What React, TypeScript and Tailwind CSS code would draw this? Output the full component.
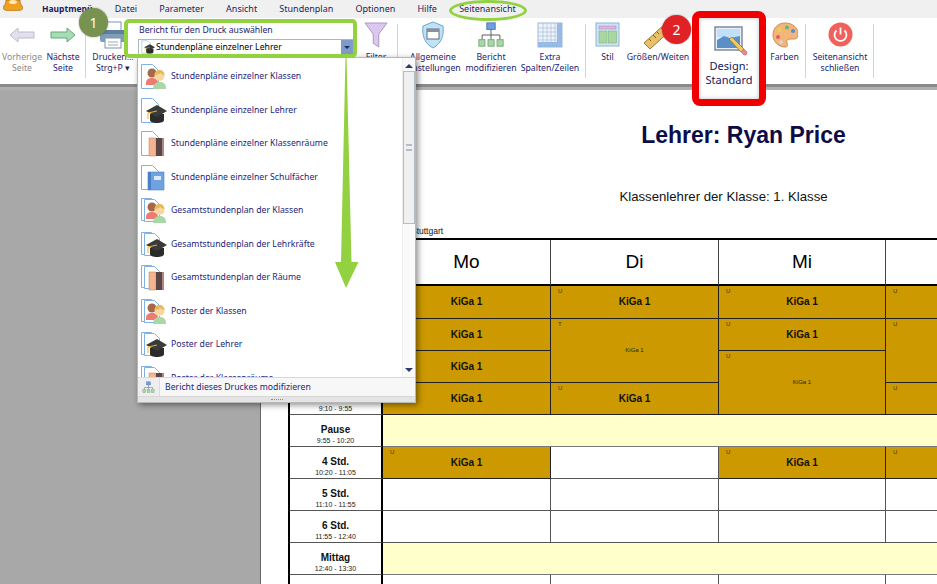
import type { ReactNode } from 'react'

const ui = "font-['Noto_Sans',sans-serif]"

function DocBack({ stacked }: { stacked?: boolean }) {
  return (
    <g fill="#fff" stroke="#7fb2e0" strokeWidth="1">
      {stacked && <path d="M1.5 1.5h10l4 4v18h-14z" />}
      <path d={stacked ? 'M4.5 2.5h10l5 5v17h-15z' : 'M1.5 1.5h11l6 6v18h-17z'} />
    </g>
  )
}

function People() {
  return (
    <g>
      <circle cx="12" cy="10" r="4.5" fill="#a5694a" />
      <path d="M6 20c0-4 3-5 6-5s6 1 6 5v2H6z" fill="#ee7a72" />
      <path d="M13 26c0-5 3-7 7-7s6 2 6 7z" fill="#a9d8a8" />
      <circle cx="19.5" cy="13" r="5" fill="#f8d6a0" />
      <path d="M14.5 12c0-3 2-5 5-5s5 2 5 5c-2 0-3-1-4-2-1 1-3 2-6 2z" fill="#e8b95c" />
    </g>
  )
}

function Cap() {
  return (
    <g>
      <path d="M10 17v6c0 2 3 3 7 3s7-1 7-3v-6z" fill="#2b2b2b" />
      <path d="M6 14l11-6 10 6-10 6z" fill="#3a3a3a" />
      <path d="M17 14l-9 2v6" fill="none" stroke="#f0b030" strokeWidth="1" />
    </g>
  )
}

function Doors() {
  return (
    <g>
      <path d="M9 8h7v18H9z" fill="#f5b490" stroke="#c98a68" strokeWidth=".6" />
      <path d="M16 8h7v18h-7z" fill="#5a4444" />
      <path d="M22 8h2v18h-2z" fill="#a88" />
    </g>
  )
}

function Book() {
  return (
    <g>
      <path d="M8 8h16v18H8z" fill="#6fa3e0" stroke="#4a7fc0" strokeWidth=".6" />
      <path d="M8 8h3v18H8z" fill="#4a80c8" />
      <path d="M14 12h7v4h-7z" fill="#dceafa" />
    </g>
  )
}

function ReportIcon({ kind, stacked, size = 27 }: { kind: string; stacked?: boolean; size?: number }) {
  return (
    <svg width={size} height={size} viewBox="0 0 27 27" className="shrink-0">
      <DocBack stacked={stacked} />
      {kind === 'people' && <People />}
      {kind === 'cap' && <Cap />}
      {kind === 'doors' && <Doors />}
      {kind === 'book' && <Book />}
    </svg>
  )
}

function OrgChart({ size = 30 }: { size?: number }) {
  return (
    <svg width={size} height={size} viewBox="0 0 30 30">
      <rect x="10.5" y="2" width="9" height="7" fill="#6f9fe0" stroke="#4a78b8" />
      <path d="M15 9v6M5.5 20v-5h19v5M15 15v5" fill="none" stroke="#555" />
      <rect x="2" y="20" width="6.5" height="7" fill="#a8d8a8" stroke="#78a878" />
      <rect x="11.8" y="20" width="6.5" height="7" fill="#a8d8a8" stroke="#78a878" />
      <rect x="21.5" y="20" width="6.5" height="7" fill="#a8d8a8" stroke="#78a878" />
    </svg>
  )
}

function GridIcon() {
  const lines = [6, 10, 14, 18, 22]
  return (
    <svg width="26" height="26" viewBox="0 0 26 26">
      <rect x="1" y="1" width="24" height="24" fill="#eef3fa" stroke="#9db8d8" />
      <rect x="20" y="1" width="5" height="24" fill="#8fb8e8" />
      <rect x="1" y="20" width="24" height="5" fill="#8fb8e8" />
      {lines.map((n) => (
        <path key={n} d={`M${n} 1v24M1 ${n}h24`} stroke="#a9c0dc" strokeWidth=".7" />
      ))}
    </svg>
  )
}

function PrinterIcon() {
  return (
    <svg width="30" height="30" viewBox="0 0 30 30">
      <rect x="7" y="2" width="16" height="10" fill="#fff" stroke="#7a93ad" />
      <rect x="2" y="10" width="26" height="12" rx="2" fill="#7f9cb8" />
      <rect x="2" y="10" width="26" height="4" rx="1" fill="#5f7f9f" />
      <rect x="7" y="18" width="16" height="10" fill="#fff" stroke="#7a93ad" />
      <path d="M10 22h10M10 25h10" stroke="#9ab" />
    </svg>
  )
}

function RibbonIcon({ kind }: { kind: string }) {
  switch (kind) {
    case 'back':
      return (
        <svg width="26" height="16" viewBox="0 0 26 16">
          <path d="M9 1L1 8l8 7v-4h16V5H9z" fill="#e2e0ee" stroke="#bcbccc" />
        </svg>
      )
    case 'next':
      return (
        <svg width="26" height="16" viewBox="0 0 26 16">
          <path d="M17 1l8 7-8 7v-4H1V5h16z" fill="#a8dcb4" stroke="#5faa78" />
        </svg>
      )
    case 'print':
      return <PrinterIcon />
    case 'filter':
      return (
        <svg width="24" height="28" viewBox="0 0 26 28">
          <path d="M1 1h24L16 13v14l-6-4V13z" fill="#dcc8ee" stroke="#a890c0" />
        </svg>
      )
    case 'shield':
      return (
        <svg width="24" height="28" viewBox="0 0 24 28">
          <path d="M12 1l10 4c1 9-1 17-10 22C3 22 1 14 2 5z" fill="#bfe2f6" stroke="#6aa6cc" />
          <rect x="6" y="8" width="12" height="10" fill="#fff" stroke="#667" />
          <rect x="6" y="8" width="12" height="3" fill="#8a8fa0" />
        </svg>
      )
    case 'org':
      return <OrgChart size={28} />
    case 'grid':
      return <GridIcon />
    case 'style':
      return (
        <svg width="25" height="25" viewBox="0 0 25 25">
          <rect x="1" y="1" width="23" height="23" fill="#cfe4f6" stroke="#8db4d6" />
          <rect x="4" y="4" width="17" height="3" fill="#d8b8e0" stroke="#a888b0" strokeWidth=".5" />
          <rect x="4" y="9" width="8" height="12" fill="#a8d8a0" stroke="#78a878" strokeWidth=".5" />
          <rect x="13.5" y="9" width="8" height="12" fill="#a8d8a0" stroke="#78a878" strokeWidth=".5" />
        </svg>
      )
    case 'ruler':
      return (
        <svg width="30" height="30" viewBox="0 0 30 30">
          <path d="M1 23L23 3l6 6L7 29z" fill="#e8c06a" stroke="#a07a30" />
          <path d="M6 19l2 2M10 15l3 3M14 12l2 2M18 8l3 3" stroke="#805a20" />
        </svg>
      )
    case 'palette':
      return (
        <svg width="26" height="26" viewBox="0 0 26 26">
          <path d="M13 1C5 1 1 7 1 13s5 12 12 12c3 0 3-2 2-4-1-3 1-4 4-4h3c3 0 4-2 4-5C26 5 20 1 13 1z" fill="#f2b67a" stroke="#c8905a" />
          <circle cx="8" cy="8" r="2" fill="#f0d050" />
          <circle cx="15" cy="5.5" r="2" fill="#68b868" />
          <circle cx="21" cy="9" r="2" fill="#5a8ae0" />
          <circle cx="6" cy="15" r="2" fill="#e85a5a" />
          <circle cx="9" cy="20" r="1.8" fill="#d8d8e8" />
        </svg>
      )
    case 'power':
      return (
        <svg width="25" height="25" viewBox="0 0 25 25">
          <circle cx="12.5" cy="12.5" r="12" fill="#f0605c" />
          <path d="M8.5 8.5a6 6 0 1 0 8 0" fill="none" stroke="#fff" strokeWidth="1.8" />
          <path d="M12.5 5.5v7" stroke="#fff" strokeWidth="1.8" />
        </svg>
      )
    default:
      return null
  }
}

function RibbonItem({ kind, lines, width, muted }: { kind: string; lines: ReactNode[]; width: string; muted?: boolean }) {
  return (
    <div className={`flex flex-col items-center shrink-0 ${width}`}>
      <div className="flex h-[33px] items-center justify-center">
        <RibbonIcon kind={kind} />
      </div>
      <div className={`mt-[1px] text-center text-[8.7px] leading-[11px] whitespace-nowrap ${muted ? 'text-[#8a8a8a]' : 'text-[#1d1d70]'}`}>
        {lines.map((line, i) => (
          <div key={i}>{line}</div>
        ))}
      </div>
    </div>
  )
}

const Sep = () => <div className="mt-[6px] h-[54px] w-px shrink-0 bg-[#d4d4d4]" />

const tabs = ['Datei', 'Parameter', 'Ansicht', 'Stundenplan', 'Optionen', 'Hilfe', 'Seitenansicht']

const reports = [
  { kind: 'people', label: 'Stundenpläne einzelner Klassen' },
  { kind: 'cap', label: 'Stundenpläne einzelner Lehrer' },
  { kind: 'doors', label: 'Stundenpläne einzelner Klassenräume' },
  { kind: 'book', label: 'Stundenpläne einzelner Schulfächer' },
  { kind: 'people', label: 'Gesamtstundenplan der Klassen', stacked: true },
  { kind: 'cap', label: 'Gesamtstundenplan der Lehrkräfte', stacked: true },
  { kind: 'doors', label: 'Gesamtstundenplan der Räume', stacked: true },
  { kind: 'people', label: 'Poster der Klassen', stacked: true },
  { kind: 'cap', label: 'Poster der Lehrer', stacked: true },
  { kind: 'doors', label: 'Poster der Klassenräume', stacked: true },
]

function TimeCell({ name, time }: { name?: string; time?: string }) {
  return (
    <div className="flex flex-col items-center justify-start border-r-2 border-b border-r-black border-b-[#555] bg-white pt-[9px]">
      {name && <div className="text-[10px] font-bold leading-[12px] text-[#111]">{name}</div>}
      {time && <div className="text-[7px] leading-[9px] text-[#222]">{time}</div>}
    </div>
  )
}

function Lesson({ mark = 'U', span, small, dash, label = true }: { mark?: string; span?: boolean; small?: boolean; dash?: boolean; label?: boolean }) {
  return (
    <div className={`relative flex items-center justify-center border-r border-b border-[#222] bg-[#cc9900] pb-[1px] ${span ? 'row-span-2' : ''}`}>
      <span className="absolute left-[7px] top-[1px] text-[6px] leading-[9px] text-[#333]">{mark}</span>
      {label && <span className={small ? 'text-[6px] text-[#222]' : 'text-[10px] font-bold text-[#111]'}>KiGa 1</span>}
      {dash && <span className="absolute bottom-[2px] h-px w-[12px] bg-[#b89a50]" />}
    </div>
  )
}

const Empty = () => <div className="border-r border-b border-[#555] bg-white" />
const Break = () => <div className="col-span-4 border-r border-b border-[#777] bg-[#ffffcc]" />

function Timetable() {
  return (
    <div className="grid w-[760px] grid-cols-[93px_168px_168px_167px_164px] grid-rows-[46px_33px_32px_32px_32px_32px_32px_32px_32px_32px_32px] border-t-2 border-l-2 border-black font-['Liberation_Sans',sans-serif]">
      <div className="border-r border-b-2 border-black bg-white" />
      {['Mo', 'Di', 'Mi', ''].map((d, i) => (
        <div key={i} className="flex items-center justify-center border-r border-b-2 border-r-[#444] border-b-black bg-white text-[19px] text-black">
          {d}
        </div>
      ))}

      <TimeCell />
      <Lesson dash />
      <Lesson dash />
      <Lesson dash />
      <Lesson label={false} />

      <TimeCell />
      <Lesson dash />
      <Lesson mark="T" span small />
      <Lesson dash />
      <Lesson span label={false} />

      <TimeCell />
      <Lesson />
      <Lesson span small />

      <TimeCell name="3 Std." time="9:10 - 9:55" />
      <Lesson />
      <Lesson />
      <Lesson label={false} />

      <TimeCell name="Pause" time="9:55 - 10:20" />
      <Break />

      <TimeCell name="4 Std." time="10:20 - 11:05" />
      <Lesson />
      <Empty />
      <Lesson />
      <Lesson label={false} />

      <TimeCell name="5 Std." time="11:10 - 11:55" />
      <Empty />
      <Empty />
      <Empty />
      <Empty />

      <TimeCell name="6 Std." time="11:55 - 12:40" />
      <Empty />
      <Empty />
      <Empty />
      <Empty />

      <TimeCell name="Mittag" time="12:40 - 13:30" />
      <Break />

      <TimeCell />
      <Empty />
      <Empty />
      <Empty />
      <Empty />
    </div>
  )
}

function ReportPopup() {
  return (
    <div className="absolute left-[137px] top-[57px] z-20 flex h-[346px] w-[279px] flex-col border border-[#b8b8b8] bg-white shadow-[2px_2px_6px_rgba(0,0,0,0.45)]">
      <div className="flex h-[319px] overflow-hidden">
        <div className="flex-1 overflow-hidden pl-[2px] pt-[2px]">
          {reports.map((r) => (
            <div key={r.label} className="flex h-[33.5px] items-center gap-[4px]">
              <ReportIcon kind={r.kind} stacked={r.stacked} />
              <span className="whitespace-nowrap text-[8.7px] text-[#25257a]">{r.label}</span>
            </div>
          ))}
        </div>
        <div className="flex w-[13px] flex-col items-center border-l border-[#eee] bg-[#fafafa]">
          <span className="mt-[6px] h-0 w-0 border-x-[4px] border-b-[4px] border-x-transparent border-b-[#2b3a66]" />
          <div className="mt-[3px] flex h-[153px] w-[12px] items-center justify-center border border-[#b4bcc8] bg-[#f0f0f0]">
            <span className="h-[7px] w-[6px] border-y-2 border-double border-[#b4bcc8]" />
          </div>
          <span className="mt-auto mb-[5px] h-0 w-0 border-x-[4px] border-t-[4px] border-x-transparent border-t-[#2b3a66]" />
        </div>
      </div>
      <div className="flex h-[19px] items-center border-t border-[#d8d8d8] bg-[#f7f7f7]">
        <div className="flex h-full w-[22px] items-center justify-center border-r border-[#ddd] bg-[#eeeeee]">
          <OrgChart size={13} />
        </div>
        <span className="ml-[5px] whitespace-nowrap pt-[1px] text-[8.7px] text-[#25257a]">Bericht dieses Druckes modifizieren</span>
      </div>
      <div className="flex flex-1 items-center justify-center border-t border-[#d8d8d8] bg-[#e4e4e4]">
        <span className="h-px w-[12px] border-t border-dotted border-[#888]" />
      </div>
    </div>
  )
}

function Annotations() {
  return (
    <>
      <div className="absolute left-[124px] top-[19px] z-30 h-[39px] w-[233px] rounded-[5px] border-[4px] border-[#92d13f]" />
      <div className="absolute left-[449px] top-[0px] z-30 h-[21px] w-[78px] rounded-[50%] border-[3px] border-[#92d13f]" />
      <svg width="30" height="234" viewBox="0 0 30 234" className="absolute left-[331px] top-[56px] z-30">
        <path d="M14.5 0h1l5 206h7L15 232 4 206h6z" fill="#92d13f" />
      </svg>
      <div className="absolute left-[79px] top-[8px] z-30 flex h-[29px] w-[29px] items-center justify-center rounded-full bg-[#77934f] text-[14px] text-white shadow-[0_0_2px_rgba(0,0,0,0.4)]">
        1
      </div>
      <div className="absolute left-[662px] top-[15px] z-30 flex h-[29px] w-[29px] items-center justify-center rounded-full bg-[#e02226] text-[14px] text-white shadow-[0_0_2px_rgba(0,0,0,0.4)]">
        2
      </div>
    </>
  )
}

export default function App() {
  return (
    <div className={`relative h-[584px] w-[937px] overflow-hidden bg-[#a8a8a8] ${ui}`}>
      <div className="flex h-[18px] items-center gap-[22.2px] bg-[#f0f0f0] pl-[42px] text-[9px] text-[#1d1d60]">
        <span className="text-[8.5px] font-bold">Hauptmenü</span>
        {tabs.map((t) => (
          <span key={t}>{t}</span>
        ))}
      </div>
      <svg width="20" height="11" viewBox="0 0 20 11" className="absolute left-[3px] top-0">
        <path d="M3 0h14c0 5 3 6 3 8 0 2-4 3-10 3S0 10 0 8c0-2 3-3 3-8z" fill="#f0a020" stroke="#9a5a10" strokeWidth=".6" />
        <ellipse cx="10" cy="2" rx="4" ry="2" fill="#fde8b0" />
      </svg>

      <div className="flex h-[66px] bg-white">
        <RibbonItem kind="back" lines={['Vorherige', 'Seite']} width="w-[44px]" muted />
        <RibbonItem kind="next" lines={['Nächste', 'Seite']} width="w-[38px]" />
        <div className="w-[3px]" />
        <Sep />
        <div className="w-[2px]" />
        <RibbonItem kind="print" lines={['Drucken...', 'Strg+P ▾']} width="w-[50px]" />
        <div className="flex w-[217px] shrink-0 flex-col pt-[7px]">
          <span className="pl-[1px] text-[8.7px] leading-[11px] text-[#1d1d70]">Bericht für den Druck auswählen</span>
          <div className="mt-[3px] flex h-[16px] w-[216px] items-center border border-[#aeb6c2] bg-white pl-[2px]">
            <ReportIcon kind="cap" size={14} />
            <span className="ml-[1px] pt-[2px] text-[8.7px] text-black">Stundenpläne einzelner Lehrer</span>
            <span className="ml-auto flex h-full w-[12px] items-center justify-center bg-[#7f9cc8]">
              <span className="h-0 w-0 border-x-[3px] border-t-[3px] border-x-transparent border-t-[#1d2d60]" />
            </span>
          </div>
        </div>
        <RibbonItem kind="filter" lines={['Filter']} width="w-[42px]" />
        <Sep />
        <div className="w-px" />
        <RibbonItem kind="shield" lines={['Allgemeine', 'Einstellungen']} width="w-[68px]" />
        <RibbonItem kind="org" lines={['Bericht', 'modifizieren']} width="w-[48px]" />
        <RibbonItem kind="grid" lines={['Extra', 'Spalten/Zeilen']} width="w-[70px]" />
        <Sep />
        <RibbonItem kind="style" lines={['Stil']} width="w-[43px]" />
        <RibbonItem kind="ruler" lines={['Größen/Weiten']} width="w-[58px]" />
        <div className="w-[5px]" />
        <div className="relative w-[72px] shrink-0">
          <div className="absolute -top-[7px] left-0 z-30 flex h-[95px] w-[74px] flex-col items-center rounded-[8px] border-[7px] border-[#f00000] bg-white pt-[8px] shadow-[inset_0_0_4px_rgba(0,0,0,0.25)]">
            <svg width="34" height="32" viewBox="0 0 34 32" className="ml-[3px]">
              <rect x="1" y="1" width="27" height="23" fill="#e8eef6" stroke="#7f8c9c" strokeWidth="1.5" />
              <path d="M3 3h23v8H3z" fill="#bfe0f8" />
              <path d="M3 14l7-4 6 2 10-2v12H3z" fill="#5a8fc8" />
              <path d="M15 13l3-2 12 12-3 3z" fill="#f0c860" stroke="#8a6a20" strokeWidth=".6" />
              <path d="M27 26l3-3 3 3-1 3h-2z" fill="#e88a90" stroke="#a05a60" strokeWidth=".5" />
            </svg>
            <div className="mt-[1px] text-center text-[11px] leading-[14px] text-[#16165c]">
              <div>Design:</div>
              <div>Standard</div>
            </div>
          </div>
        </div>
        <RibbonItem kind="palette" lines={['Farben']} width="w-[41px]" />
        <Sep />
        <div className="w-px" />
        <RibbonItem kind="power" lines={['Seitenansicht', 'schließen']} width="w-[66px]" />
        <Sep />
      </div>
      <div className="h-[6px] border-t-[3px] border-[#8a8a8a] bg-[#b0b0b0]" />

      <div className="flex h-[494px]">
        <div className="w-[260px] shrink-0" />
        <div className="min-w-0 flex-1 overflow-hidden border-l border-[#666] bg-white font-['Liberation_Sans',sans-serif]">
          <div className="w-[936px]">
            <div className="ml-[29px] pt-[31px] text-center text-[23px] font-bold leading-[28px] text-[#0c0c48]">Lehrer: Ryan Price</div>
            <div className="mr-[11px] mt-[38px] text-center text-[13.2px] leading-[20px] text-[#111]">Klassenlehrer der Klasse: 1. Klasse</div>
            <div className="ml-[150px] mt-[19px] text-[8.5px] leading-[11px] text-[#111]">Stuttgart</div>
            <div className="ml-[27px] mt-[1px]">
              <Timetable />
            </div>
          </div>
        </div>
      </div>

      <ReportPopup />
      <Annotations />
    </div>
  )
}
